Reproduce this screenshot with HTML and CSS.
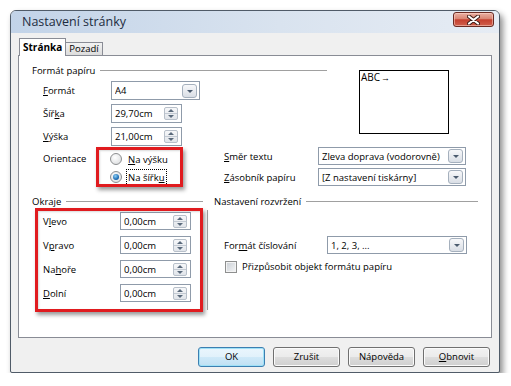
FILE: index.html
```html
<!DOCTYPE html>
<html lang="cs">
<head>
    <meta charset="UTF-8">
    <title>Nastavení stránky</title>
    <link rel="stylesheet" href="styles.css">
</head>
<body>
    <div class="window">
        <div class="titlebar">
            <span class="title">Nastavení stránky</span>
            <div class="close-btn">
                <svg width="13" height="10" viewBox="0 0 13 10">
                    <path d="M2 1.5 L11 8.5 M11 1.5 L2 8.5" stroke="#3b1a14" stroke-width="4" stroke-linecap="round"/>
                    <path d="M2 1.5 L11 8.5 M11 1.5 L2 8.5" stroke="#fff" stroke-width="2.2" stroke-linecap="round"/>
                </svg>
            </div>
        </div>

        <div class="client">
            <div class="tabs">
                <div class="tab active">Stránka</div>
                <div class="tab">Pozadí</div>
            </div>

            <div class="panel">
                <!-- paper format -->
                <div class="paper">
                    <div class="paper-left">
                        <div class="legend"><span>Formát papíru</span></div>
                        <div class="row">
                            <span class="lbl"><u>F</u>ormát</span>
                            <div class="combo w89"><span>A4</span><i class="drop"></i></div>
                        </div>
                        <div class="row">
                            <span class="lbl">Šíř<u>k</u>a</span>
                            <div class="spin"><span>29,70cm</span><i class="arrows"><b></b><b></b></i></div>
                        </div>
                        <div class="row">
                            <span class="lbl"><u>V</u>ýška</span>
                            <div class="spin"><span>21,00cm</span><i class="arrows"><b></b><b></b></i></div>
                        </div>
                    </div>
                    <div class="preview">ABC<span class="arrow">&rarr;</span></div>
                </div>

                <div class="orient">
                    <div class="orient-left">
                        <span class="lbl-orient">Orientace</span>
                        <div class="radios">
                            <div class="radio-row"><i class="radio"></i><span><u>N</u>a výšku</span></div>
                            <div class="radio-row"><i class="radio on"></i><span class="focus">Na šířk<u>u</u></span></div>
                            <div class="mark mark-orient"></div>
                        </div>
                    </div>
                    <div class="orient-right">
                        <div class="row2">
                            <span class="lbl2"><u>S</u>měr textu</span>
                            <div class="combo w148"><span>Zleva doprava (vodorovně)</span><i class="drop"></i></div>
                        </div>
                        <div class="row2">
                            <span class="lbl2"><u>Z</u>ásobník papíru</span>
                            <div class="combo w148"><span>[Z nastavení tiskárny]</span><i class="drop"></i></div>
                        </div>
                    </div>
                </div>

                <!-- margins and layout -->
                <div class="bottom">
                    <div class="margins">
                        <div class="legend"><span>Okraje</span></div>
                        <div class="mrows">
                            <div class="mrow">
                                <span class="lbl-m">V<u>l</u>evo</span>
                                <div class="spin"><span>0,00cm</span><i class="arrows"><b></b><b></b></i></div>
                            </div>
                            <div class="mrow">
                                <span class="lbl-m">V<u>p</u>ravo</span>
                                <div class="spin"><span>0,00cm</span><i class="arrows"><b></b><b></b></i></div>
                            </div>
                            <div class="mrow">
                                <span class="lbl-m">Na<u>h</u>oře</span>
                                <div class="spin"><span>0,00cm</span><i class="arrows"><b></b><b></b></i></div>
                            </div>
                            <div class="mrow">
                                <span class="lbl-m"><u>D</u>olní</span>
                                <div class="spin"><span>0,00cm</span><i class="arrows"><b></b><b></b></i></div>
                            </div>
                        </div>
                        <div class="mark mark-margins"></div>
                    </div>

                    <div class="vsep"></div>

                    <div class="layout">
                        <div class="legend"><span>Nastavení rozvržení</span></div>
                        <div class="lrow">
                            <span class="lbl-l">For<u>m</u>át číslování</span>
                            <div class="combo w140"><span>1, 2, 3, ...</span><i class="drop"></i></div>
                        </div>
                        <div class="check-row">
                            <i class="check"></i>
                            <span>Přizpůsobit objekt formátu papíru</span>
                        </div>
                    </div>
                </div>
            </div>

            <div class="buttons">
                <div class="btn default">OK</div>
                <div class="btn">Zrušit</div>
                <div class="btn">Nápověda</div>
                <div class="btn"><u>O</u>bnovit</div>
            </div>
        </div>
    </div>
</body>
</html>
```

FILE: styles.css
```css
body {
    margin: 0;
    background: #fff;
    font-family: "Open Sans", "Noto Sans", sans-serif;
    font-size: 9.5px;
    color: #000;
}

* {
    box-sizing: border-box;
}

u {
    text-underline-offset: 1px;
}

.window {
    margin: 10px 0 0 10px;
    width: 490px;
    height: 363px;
    border: 1px solid #505b68;
    border-radius: 6px 6px 2px 2px;
    background: #f0f0f0;
    box-shadow: 3px 4px 6px rgba(0, 0, 0, 0.45);
    display: flex;
    flex-direction: column;
}

.titlebar {
    height: 22px;
    display: flex;
    align-items: flex-start;
    background: linear-gradient(to right, #c2d3e8, #d9e3ef 55%, #e6ecf4);
    border-radius: 5px 5px 0 0;
}

.title {
    margin: 3px 0 0 11px;
    font-size: 12.5px;
    line-height: 16px;
    color: #1d2c40;
}

.close-btn {
    margin: 1px 5px 0 auto;
    width: 41px;
    height: 15px;
    border: 1px solid #6a2a22;
    border-radius: 3px;
    background: linear-gradient(#eab0a3, #d98573 45%, #c5402f 52%, #d0604d);
    box-shadow: inset 0 0 0 1px rgba(255, 220, 210, 0.5);
    display: flex;
    align-items: center;
    justify-content: center;
}

.client {
    flex: 1;
    padding: 5px 7px 0 7px;
    display: flex;
    flex-direction: column;
}

/* tabs */

.tabs {
    display: flex;
    align-items: flex-end;
    height: 17px;
    padding-left: 1px;
}

.tab {
    height: 13px;
    padding: 0 3px;
    border: 1px solid #898c95;
    border-bottom: none;
    background: linear-gradient(#f2f2f2, #dcdcdc);
    line-height: 12px;
    margin-left: -1px;
}

.tab.active {
    height: 18px;
    margin-bottom: -1px;
    margin-left: 0;
    background: #fff;
    font-weight: bold;
    font-size: 10px;
    line-height: 17px;
    position: relative;
    z-index: 1;
}

.panel {
    height: 283px;
    border: 1px solid #898c95;
    background: #fff;
    padding: 7px 0 0 13px;
}

.legend {
    display: flex;
    align-items: center;
    height: 14px;
}

.legend::after {
    content: "";
    flex: 1;
    height: 1px;
    margin-left: 5px;
    background: #a0a0a0;
}

/* paper */

.paper {
    display: flex;
    align-items: flex-start;
}

.paper-left {
    width: 295px;
}

.row {
    display: flex;
    align-items: center;
    height: 19px;
    margin-top: 4px;
    padding-left: 11px;
}

.lbl {
    width: 68px;
}

.preview {
    margin: 7px 0 0 32px;
    width: 90px;
    height: 64px;
    border: 1px solid #000;
    line-height: 12px;
    padding-left: 1px;
    font-size: 10px;
}

.preview .arrow {
    font-size: 9px;
    margin-left: 1px;
}

/* controls */

.combo,
.spin {
    display: flex;
    align-items: center;
    height: 19px;
    border: 1px solid #8f9baa;
    background: #fff;
    padding-left: 3px;
}

.combo span,
.spin span {
    flex: 1;
    white-space: nowrap;
    overflow: hidden;
}

.w89 { width: 89px; }
.w148 { width: 148px; height: 18px; }
.w140 { width: 140px; height: 18px; }

.spin {
    width: 71px;
}

.drop {
    width: 15px;
    height: 14px;
    margin-right: 2px;
    border: 1px solid #a5b0bd;
    border-radius: 3px;
    background: linear-gradient(#f7f8fa, #d9dee5);
    display: flex;
    align-items: center;
    justify-content: center;
}

.drop::after {
    content: "";
    border-left: 3px solid transparent;
    border-right: 3px solid transparent;
    border-top: 3px solid #4b5b6e;
    margin-top: 1px;
}

.arrows {
    width: 14px;
    height: 13px;
    margin-right: 3px;
    display: flex;
    flex-direction: column;
    border: 1px solid #b8c0ca;
    border-radius: 2px;
    background: linear-gradient(#f6f7f9, #e1e5ea);
}

.arrows b {
    flex: 1;
    display: flex;
    align-items: center;
    justify-content: center;
}

.arrows b:first-child {
    border-bottom: 1px solid #c3cad3;
}

.arrows b:first-child::after {
    content: "";
    border-left: 3px solid transparent;
    border-right: 3px solid transparent;
    border-bottom: 3px solid #5a6a7c;
}

.arrows b:last-child::after {
    content: "";
    border-left: 3px solid transparent;
    border-right: 3px solid transparent;
    border-top: 3px solid #5a6a7c;
}

/* orientation */

.orient {
    display: flex;
    align-items: flex-start;
}

.orient-left {
    width: 192px;
    margin-top: 4px;
    padding-left: 11px;
    display: flex;
    align-items: flex-start;
}

.lbl-orient {
    width: 67px;
    line-height: 18px;
}

.radios {
    position: relative;
}

.radio-row {
    display: flex;
    align-items: center;
    height: 18px;
}

.radio {
    width: 12px;
    height: 12px;
    margin-right: 6px;
    border-radius: 50%;
    border: 1px solid #8c8e90;
    background: radial-gradient(circle at 40% 35%, #ffffff, #d6d8da);
    display: flex;
    align-items: center;
    justify-content: center;
}

.radio.on::after {
    content: "";
    width: 6px;
    height: 6px;
    border-radius: 50%;
    background: radial-gradient(circle at 40% 35%, #8fd0f5, #1f6fb6 60%, #164a80);
}

.focus {
    outline: 1px dotted #000;
    outline-offset: 1px;
}

.orient-right {
    margin-top: 1px;
    display: flex;
    flex-direction: column;
    gap: 3px;
}

.row2 {
    display: flex;
    align-items: center;
    height: 18px;
}

.lbl2 {
    width: 94px;
}

/* annotation boxes */

.mark {
    position: absolute;
    border: 3px solid #e01b1f;
    box-shadow: 2px 3px 4px rgba(0, 0, 0, 0.4), inset 1px 1px 2px rgba(0, 0, 0, 0.15);
}

.mark-orient {
    left: -14px;
    top: -3px;
    width: 87px;
    height: 40px;
}

.mark-margins {
    left: 3px;
    top: 14px;
    width: 168px;
    height: 104px;
}

/* margins & layout */

.bottom {
    display: flex;
    align-items: flex-start;
    margin-top: 8px;
}

.margins {
    position: relative;
    width: 171px;
}

.mrows {
    display: flex;
    flex-direction: column;
    gap: 6px;
    margin-top: 4px;
}

.mrow {
    display: flex;
    align-items: center;
    height: 18px;
    padding-left: 11px;
}

.mrow .spin {
    height: 18px;
}

.lbl-m {
    width: 77px;
}

.vsep {
    width: 1px;
    height: 100px;
    margin: 16px 6px 0 4px;
    background: #a0a0a0;
}

.layout {
    width: 264px;
}

.lrow {
    display: flex;
    align-items: center;
    height: 18px;
    margin-top: 28px;
    padding-left: 10px;
}

.lbl-l {
    width: 103px;
}

.check-row {
    display: flex;
    align-items: center;
    height: 15px;
    margin-top: 5px;
    padding-left: 11px;
}

.check {
    width: 12px;
    height: 12px;
    margin-right: 5px;
    border: 1px solid #8e8f8f;
    background: linear-gradient(135deg, #c9ced4, #f4f5f6);
    box-shadow: inset 0 0 0 1px #f3f3f3;
}

/* buttons */

.buttons {
    display: flex;
    justify-content: flex-end;
    gap: 8px;
    margin-top: 9px;
    padding-right: 2px;
}

.btn {
    width: 67px;
    height: 20px;
    border: 1px solid #707070;
    border-radius: 3px;
    background: linear-gradient(#f2f2f2, #ebebeb 50%, #dddddd 51%, #cfcfcf);
    box-shadow: inset 0 0 0 1px #fbfbfb;
    text-align: center;
    line-height: 18px;
}

.btn.default {
    border-color: #3c7fb1;
    box-shadow: inset 0 0 0 1px #9fe1f7;
    background: linear-gradient(#eaf6fd, #e1f1fb 50%, #cfe9f8 51%, #bfe0f3);
}
```
